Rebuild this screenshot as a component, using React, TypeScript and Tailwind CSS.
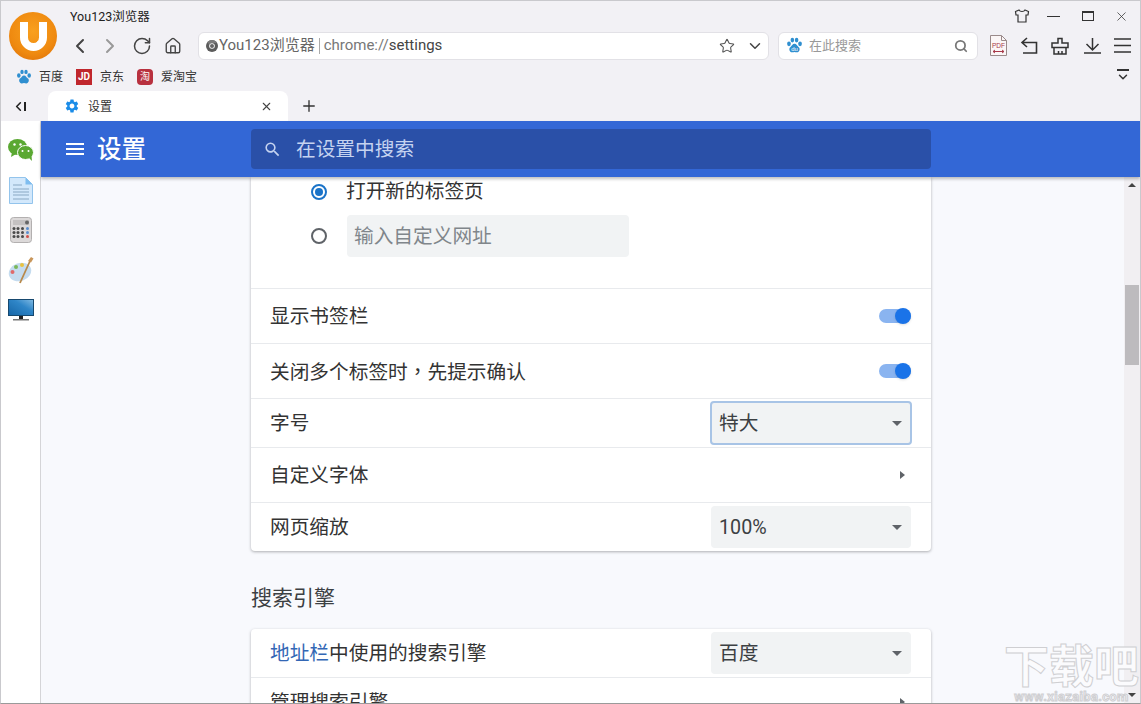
import { ChevronLeft, ChevronRight, RotateCw, Home, Star, ChevronDown, Search, X, Plus } from "lucide-react";
import { MdMenu, MdSearch, MdSettings } from "react-icons/md";

const BaiduPaw = ({ size = 18, du }: { size?: number; du?: boolean }) => (
  <svg width={size} height={size} viewBox="0 0 20 20">
    <ellipse cx="3.500" cy="8" rx="2.200" ry="2.800" fill="#2f8fd0" />
    <ellipse cx="7.500" cy="3.600" rx="2.100" ry="2.800" fill="#2f8fd0" />
    <ellipse cx="12.500" cy="3.600" rx="2.100" ry="2.800" fill="#2f8fd0" />
    <ellipse cx="16.500" cy="8" rx="2.200" ry="2.800" fill="#2f8fd0" />
    <path d="M10 8c-2.500 0-3 2.600-5 4-2 1.600-1 6 2.200 6 1.200 0 1.800-.4 2.800-.4s1.600.4 2.800.4c3.200 0 4.200-4.400 2.200-6-2-1.400-2.500-4-5-4z" fill="#2f8fd0" />
    {du && (
      <text x="10" y="16.500" fontSize="7" fill="#fff" textAnchor="middle" fontFamily="Liberation Sans, sans-serif">du</text>
    )}
  </svg>
);

const Toggle = () => (
  <div className="relative w-[32px] h-[14px] rounded-full bg-[#8ab4f0]">
    <div className="absolute right-0 top-[-1px] w-4 h-4 rounded-full bg-[#1a73e8] shadow" />
  </div>
);

const Caret = () => (
  <div className="w-0 h-0 border-x-[5px] border-x-transparent border-t-[5px] border-t-[#5f6368]" />
);

const Select = ({ value, focused }: { value: string; focused?: boolean }) => (
  <div
    className={`flex items-center justify-between rounded bg-[#f1f3f4] text-[#3c4043] ${
      focused ? "h-[44px] w-[202px] -mx-px border-2 border-[#a8c4e6] pl-[7px] pr-2" : "h-[42px] w-[200px] pl-2 pr-[9px]"
    }`}
  >
    <span className="pt-[2px]">{value}</span>
    <Caret />
  </div>
);

const Row = ({ h, children }: { h: string; children: React.ReactNode }) => (
  <div className={`${h} flex items-center justify-between pl-[19px] pr-5 border-t border-[#e8eaed] text-[#333]`}>{children}</div>
);

const Label = ({ children }: { children: React.ReactNode }) => <span className="pt-[2px]">{children}</span>;

const RowArrow = () => (
  <div className="w-0 h-0 border-y-[4px] border-y-transparent border-l-[5px] border-l-[#5f6368] mr-[6px]" />
);

const sideIcons = [
  <svg key="wx" width="28" height="24" viewBox="0 0 28 24">
    <ellipse cx="10.500" cy="9" rx="9.500" ry="8" fill="#5aa832" />
    <path d="M5 14l-1 5 5-3z" fill="#5aa832" />
    <ellipse cx="18.500" cy="14.500" rx="8" ry="7" fill="#5aa832" stroke="#fff" strokeWidth="1" />
    <path d="M22 20l3 3-.5-5z" fill="#5aa832" />
    <circle cx="7.500" cy="6.500" r="1.200" fill="#fff" />
    <circle cx="13.500" cy="6.500" r="1.200" fill="#fff" />
    <circle cx="15.500" cy="13" r="1" fill="#fff" />
    <circle cx="21.500" cy="13" r="1" fill="#fff" />
  </svg>,
  <svg key="doc" width="24" height="27" viewBox="0 0 24 27">
    <path d="M.5.5h16l7 7v19H.5z" fill="#d3e8fb" stroke="#93c4ec" />
    <path d="M16.500.5v7h7z" fill="#7fbdf0" />
    <path d="M4 8h9M4 12h16M4 15h16M4 18h16M4 22h16" stroke="#8aa7c4" strokeWidth="1.200" />
  </svg>,
  <svg key="calc" width="22" height="26" viewBox="0 0 22 26">
    <rect x=".5" y=".5" width="21" height="25" rx="3" fill="#dcd9d9" stroke="#b3b0b0" />
    <rect x="3" y="3" width="16" height="5" fill="#c4c1c1" />
    <circle cx="17" cy="5.500" r="2" fill="#666" />
    {[11.500, 15.500, 19.500].map((y) =>
      [4, 8, 12.500, 17.500].map((x) => (
        <circle key={`${x}-${y}`} cx={x} cy={y} r="1.500" fill={x === 17.500 ? (y === 19.500 ? "#d0504a" : "#5b8fd0") : "#4a4a4a"} />
      )),
    )}
  </svg>,
  <svg key="paint" width="26" height="28" viewBox="0 0 26 28">
    <ellipse cx="12" cy="16" rx="11.500" ry="9" fill="#c5dcef" transform="rotate(-20 12 16)" />
    <circle cx="4.500" cy="16" r="2" fill="#e06a6a" />
    <circle cx="8" cy="11" r="2" fill="#7ab75a" />
    <circle cx="14" cy="9" r="2" fill="#e9c23f" />
    <path d="M12 27L22 5" stroke="#b8894a" strokeWidth="1.800" />
    <path d="M20 5l3-4 2.500 1.500-2.500 4z" fill="#c9965a" />
  </svg>,
  <svg key="tv" width="26" height="22" viewBox="0 0 26 22">
    <defs>
      <linearGradient id="tvg" x1="0" y1="1" x2="1" y2="0">
        <stop offset="0" stopColor="#1767a8" />
        <stop offset="0.6" stopColor="#2f86c8" />
        <stop offset="1" stopColor="#7db8e2" />
      </linearGradient>
    </defs>
    <rect x="0" y="0" width="26" height="17" fill="#17496f" />
    <path d="M1 1h24v15H1z" fill="url(#tvg)" />
    <rect x="11" y="17" width="4" height="3" fill="#222" />
    <rect x="5" y="20" width="16" height="1.500" fill="#777" />
  </svg>,
];

export default function App() {
  return (
    <div className="w-[1141px] h-[704px] overflow-hidden flex flex-col bg-[#f2f1f5] border border-[#c9c9cd] border-b-[#9a9a9a] font-['Roboto','Noto_Sans_CJK_SC',sans-serif] text-[#333]">
      {/* title + nav */}
      <div className="h-[61px] flex shrink-0">
        <div className="w-[69px] pl-2 pt-[11px] shrink-0">
          <div className="w-12 h-12 rounded-full bg-[radial-gradient(circle_at_50%_40%,#f9a01e,#ef8a10_60%,#d96a08)] flex items-center justify-center">
            <div className="w-[27px] h-[29px] border-[8px] border-t-0 border-white rounded-b-[14px] mt-px" />
          </div>
        </div>
        <div className="flex-1 flex flex-col">
          <div className="h-[30px] flex items-center justify-between pr-[11px]">
            <span className="text-[12.500px] text-[#222] pt-0.5">You123浏览器</span>
            <div className="flex items-center text-[#333]">
              <svg width="16" height="14" viewBox="0 0 16 14" fill="none" stroke="#333" strokeWidth="1.200">
                <path d="M5 1L1.500 2.500 2 6h2v7h8V6h2l.5-3.500L11 1C10 3 6 3 5 1z" />
              </svg>
              <div className="ml-[17px] w-[13px] h-px bg-[#333]" />
              <div className="ml-[22px] w-[12px] h-[10px] border border-t-2 border-[#333]" />
              <X size={15} strokeWidth={1.200} className="ml-[20px]" />
            </div>
          </div>
          <div className="h-[29px] flex items-center text-[#444]">
            <ChevronLeft size={24} strokeWidth={2} className="-ml-[2px]" />
            <ChevronRight size={24} strokeWidth={2} className="ml-[6px] text-[#999]" />
            <RotateCw size={20} strokeWidth={1.800} className="ml-[10px]" />
            <Home size={18} strokeWidth={1.800} className="ml-[12px]" />
            <div className="ml-[16px] w-[571px] h-[28px] bg-white border border-[#e2e1e6] rounded-md flex items-center pl-[7px] pr-[4px] text-[15px] text-[#666]">
              <svg width="12" height="12" viewBox="0 0 12 12" className="mr-px">
                <circle cx="6" cy="6" r="6" fill="#5c5c5c" />
                <path d="M6 0a6 6 0 0 1 5.200 3H6a3 3 0 0 0-2.800 1.800L1.500 2A6 6 0 0 1 6 0z" fill="#7a7a7a" />
                <circle cx="6" cy="6" r="2.800" fill="#fff" />
                <circle cx="6" cy="6" r="2" fill="#666" />
              </svg>
              <span>You123浏览器</span>
              <span className="w-px h-4 bg-[#aaa] mx-[4px]" />
              <span className="text-[#777]">chrome://</span>
              <span className="text-[#444]">settings</span>
              <Star size={16} strokeWidth={1.600} className="ml-auto text-[#555]" />
              <ChevronDown size={18} strokeWidth={2} className="ml-[11px] text-[#444]" />
            </div>
            <div className="ml-[9px] w-[200px] h-[28px] bg-white border border-[#e2e1e6] rounded-md flex items-center pl-[7px] pr-[9px] text-[13px] text-[#999]">
              <BaiduPaw size={17} du />
              <span className="ml-[6px]">在此搜索</span>
              <Search size={14} strokeWidth={3} className="ml-auto text-[#777]" />
            </div>
            <svg width="17" height="21" viewBox="0 0 17 21" className="ml-[12px]">
              <path d="M.5.5h11l5 5v15H.5z" fill="#fbf6f6" stroke="#9a8a8a" />
              <path d="M11.500.5v5h5" fill="none" stroke="#9a8a8a" />
              <text x="8.500" y="12.500" fontSize="6.500" textAnchor="middle" fill="#a83a4a" fontFamily="Liberation Sans, sans-serif">PDF</text>
              <path d="M3 16.500h11M3 16.500l2-1.500M3 16.500l2 1.500M14 16.500l-2-1.500M14 16.500l-2 1.500" stroke="#a83a4a" fill="none" />
            </svg>
            <svg width="18" height="17" viewBox="0 0 18 17" fill="none" stroke="#333" strokeWidth="1.600" className="ml-[13px]">
              <path d="M7 1L2 5.500 7 10M2 5.500h14.500V16H3" />
            </svg>
            <svg width="18" height="18" viewBox="0 0 18 18" fill="none" stroke="#333" strokeWidth="1.500" className="ml-[13px]">
              <path d="M7 1.500h4V6h6v4.500H1V6h6zM3 10.500v6.500h12v-6.500M7.500 14v3M11 14v3" />
            </svg>
            <svg width="17" height="16" viewBox="0 0 17 16" fill="none" stroke="#333" strokeWidth="1.500" className="ml-[15px]">
              <path d="M8.500 0v11.500M2.500 6l6 6 6-6M0 15h17" />
            </svg>
            <svg width="17" height="15" viewBox="0 0 17 15" fill="none" stroke="#333" strokeWidth="1.500" className="ml-[13px]">
              <path d="M0 1h17M0 7.500h17M0 14h17" />
            </svg>
          </div>
        </div>
      </div>

      {/* bookmarks */}
      <div className="h-[29px] shrink-0 flex items-center pl-[15px] pr-[10px] text-xs text-[#333]">
        <BaiduPaw size={16} />
        <span className="ml-[7px]">百度</span>
        <div className="ml-[13px] w-4 h-4 bg-[#c0272d] text-white text-[10px] font-bold leading-4 text-center">JD</div>
        <span className="ml-[8px]">京东</span>
        <div className="ml-[13px] w-4 h-4 rounded-sm bg-[#b8313f] text-white text-[10px] leading-4 text-center">淘</div>
        <span className="ml-[8px]">爱淘宝</span>
        <div className="ml-auto flex flex-col items-center">
          <div className="w-[12px] h-[2px] bg-[#333]" />
          <ChevronDown size={14} strokeWidth={2.500} className="-mt-[1px] text-[#333]" />
        </div>
      </div>

      {/* tabs */}
      <div className="h-[30px] shrink-0 flex items-end">
        <div className="w-[47px] h-[30px] flex items-center justify-center text-[#222] pr-[12px]">
          <ChevronLeft size={15} strokeWidth={2.500} />
          <div className="w-[2px] h-[9px] bg-[#222] -ml-[2px]" />
        </div>
        <div className="w-[240px] h-[30px] bg-white rounded-t-lg flex items-center pl-[16px] pr-[15px] text-xs text-[#333]">
          <MdSettings size={16} className="text-[#1a8ce8]" />
          <span className="ml-[8px] pt-px">设置</span>
          <X size={13} strokeWidth={2} className="ml-auto text-[#444]" />
        </div>
        <Plus size={18} strokeWidth={1.800} className="ml-[12px] mb-[6px] text-[#333]" />
      </div>

      {/* body */}
      <div className="flex-1 min-h-0 flex">
        <div className="w-[40px] shrink-0 bg-white border-r border-[#d5d5d8] flex flex-col items-center pt-[9px]">
          {sideIcons.map((icon, i) => (
            <div key={i} className="h-[40px] flex items-center justify-center">{icon}</div>
          ))}
        </div>
        <div className="flex-1 min-w-0 flex flex-col bg-[#f8f9fd]">
          <div className="h-[56px] shrink-0 bg-[#3367d6] flex items-center shadow-[0_2px_3px_rgba(0,0,0,0.25)] relative z-10">
            <div className="w-[210px] shrink-0 flex items-center pl-[22px] text-white">
              <MdMenu size={24} />
              <span className="ml-[10px] pt-[3px] text-[24.500px] font-medium">设置</span>
            </div>
            <div className="w-[680px] h-[40px] rounded-sm bg-[#2a50a8] flex items-center pl-[12px] text-[19.700px] text-[#c5d3f0]">
              <MdSearch size={19} />
              <span className="ml-[14px] pt-[2px]">在设置中搜索</span>
            </div>
          </div>
          <div className="flex-1 min-h-0 flex overflow-hidden relative">
            <div className="flex-1 min-w-0 pl-[210px] text-[19.700px]">
              <div className="w-[680px] bg-white rounded-b shadow-[0_1px_3px_rgba(60,64,67,0.4)]">
                <div className="h-[111px] pl-[60px] pt-[3px]">
                  <div className="flex items-center h-[24px]">
                    <div className="w-4 h-4 rounded-full border-2 border-[#1a73c8] flex items-center justify-center">
                      <div className="w-2 h-2 rounded-full bg-[#1a73c8]" />
                    </div>
                    <span className="ml-[19px]">打开新的标签页</span>
                  </div>
                  <div className="flex items-center mt-[11px]">
                    <div className="w-4 h-4 rounded-full border-2 border-[#5f6368]" />
                    <div className="ml-[20px] w-[282px] h-[42px] rounded bg-[#f1f3f4] flex items-center pl-[7px] pt-[2px] text-[#80868b]">输入自定义网址</div>
                  </div>
                </div>
                <Row h="h-[55px]"><Label>显示书签栏</Label><Toggle /></Row>
                <Row h="h-[55px]">
                  <Label>关闭多个标签时<span className="font-['Noto_Sans_CJK_TC']">，</span>先提示确认</Label>
                  <Toggle />
                </Row>
                <Row h="h-[49px]"><Label>字号</Label><Select value="特大" focused /></Row>
                <Row h="h-[55px]"><Label>自定义字体</Label><RowArrow /></Row>
                <Row h="h-[49px]"><Label>网页缩放</Label><Select value="100%" /></Row>
              </div>
              <div className="w-[680px] h-[78px] flex items-end pb-[15px] text-[21px] text-[#3c4043]">搜索引擎</div>
              <div className="w-[680px] bg-white rounded-t shadow-[0_1px_3px_rgba(60,64,67,0.4)]">
                <div className="h-[48px] flex items-center justify-between pl-[19px] pr-5">
                  <Label><span className="text-[#3367b5]">地址栏</span>中使用的搜索引擎</Label>
                  <Select value="百度" />
                </div>
                <Row h="h-[49px]"><Label>管理搜索引擎</Label><RowArrow /></Row>
              </div>
            </div>
            {/* scrollbar */}
            <div className="w-[16px] shrink-0 bg-[#f1eff2] flex flex-col items-center relative">
              <div className="w-0 h-0 mt-[6px] border-x-[4px] border-x-transparent border-b-[4px] border-b-[#444]" />
              <div className="w-[14px] h-[80px] bg-[#bdbbbe] mt-[98px]" />
              <div className="mt-auto mb-[6px] w-0 h-0 border-x-[4px] border-x-transparent border-t-[4px] border-t-[#444]" />
            </div>
            {/* watermark */}
            <div className="absolute right-[1px] bottom-0 flex flex-col items-center text-[#fbfbfd] [-webkit-text-stroke:1px_#cfcfd2]">
              <span className="text-[45px] leading-[46px] font-bold">下载吧</span>
              <span className="text-[13px] leading-[12px] tracking-wide text-[#f3f3f6] font-bold">www.xiazaiba.com</span>
            </div>
          </div>
        </div>
      </div>
    </div>
  );
}
